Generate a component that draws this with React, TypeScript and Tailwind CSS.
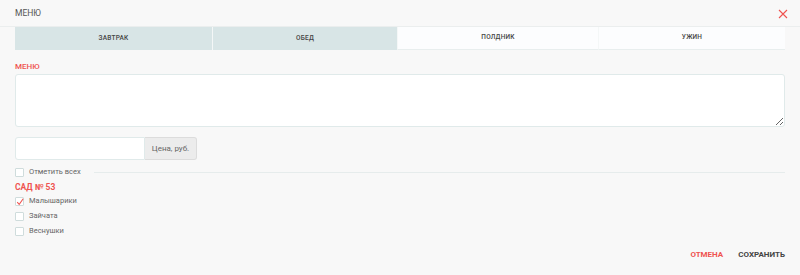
import React from "react";

const tabs = [
  { label: "ЗАВТРАК", w: "w-[197px]", active: true },
  { label: "ОБЕД", w: "w-[185px]", active: true },
  { label: "ПОЛДНИК", w: "w-[201px]", active: false },
  { label: "УЖИН", w: "flex-1", active: false },
];

const groups = [
  { name: "Малышарики", checked: true },
  { name: "Зайчата", checked: false },
  { name: "Веснушки", checked: false },
];

function Check({ checked }: { checked?: boolean }) {
  return (
    <span className="relative flex h-[9px] w-[9px] shrink-0 items-center justify-center rounded-[1px] border border-[#cfdcdc] bg-white">
      {checked && (
        <svg viewBox="0 0 10 10" className="absolute left-[0px] top-[0px] h-[8px] w-[8px]">
          <path d="M1.5 5.2 L4 8 L9 1" fill="none" stroke="#ef5350" strokeWidth="1.3" />
        </svg>
      )}
    </span>
  );
}

export default function App() {
  return (
    <div className="h-[275px] w-[800px] bg-[#f8f8f8] text-[#555] [font-family:Roboto,'Noto_Sans',sans-serif]">
      {/* Header */}
      <div className="flex h-[27px] items-center justify-between border-b border-[#ebeeee] px-[15px]">
        <span className="text-[8.5px] text-[#555]">МЕНЮ</span>
        <svg viewBox="0 0 10 10" className="mr-[-3px] mt-[2px] h-[10px] w-[10px]">
          <path d="M1 1 L9 9 M9 1 L1 9" stroke="#ef5350" strokeWidth="1.1" fill="none" />
        </svg>
      </div>

      <div className="px-[15px]">
        {/* Tabs */}
        <div className="flex h-[23px]">
          {tabs.map((t, i) => (
            <div
              key={t.label}
              className={`${t.w} flex items-center justify-center text-[6.5px] font-medium tracking-[0.2px] text-[#444] ${
                t.active ? "bg-[#d8e5e6]" : "border-b border-[#e8eeee] bg-[#fcfdfe]"
              } ${i > 0 ? "border-l border-l-[#f4f7f7]" : ""}`}
            >
              {t.label}
            </div>
          ))}
        </div>

        {/* Menu text */}
        <div className="mt-[11px] text-[8px] font-medium leading-[12px] text-[#ef5350]">МЕНЮ</div>
        <textarea className="mt-[1px] block h-[53px] w-full resize-y rounded-[3px] border border-[#e0eaea] bg-white outline-none" />

        {/* Price */}
        <div className="mt-[10px] flex h-[23px] w-[182px]">
          <input className="h-full w-[130px] rounded-l-[3px] border border-[#e0eaea] bg-white outline-none" />
          <span className="flex h-full flex-1 items-center justify-center rounded-r-[3px] border border-l-0 border-[#dcdcdc] bg-[#ececec] text-[8px] text-[#666]">
            Цена, руб.
          </span>
        </div>

        {/* Select all */}
        <div className="mt-[6px] flex h-[12px] items-center gap-[5px]">
          <Check />
          <span className="text-[7.5px] text-[#666]">Отметить всех</span>
          <div className="ml-[8px] h-px flex-1 bg-[#e6ecec]" />
        </div>

        <div className="mt-[3px] text-[8.5px] font-bold leading-[12px] text-[#ef5350]">САД № 53</div>

        <div className="mt-[2px] flex flex-col gap-[3px]">
          {groups.map((g) => (
            <div key={g.name} className="flex h-[12px] items-center gap-[5px]">
              <Check checked={g.checked} />
              <span className="text-[7.5px] text-[#666]">{g.name}</span>
            </div>
          ))}
        </div>

        {/* Footer */}
        <div className="mt-[12px] flex justify-end gap-[15px] text-[8px] font-bold">
          <span className="text-[#ef5350]">ОТМЕНА</span>
          <span className="text-[#444]">СОХРАНИТЬ</span>
        </div>
      </div>
    </div>
  );
}
